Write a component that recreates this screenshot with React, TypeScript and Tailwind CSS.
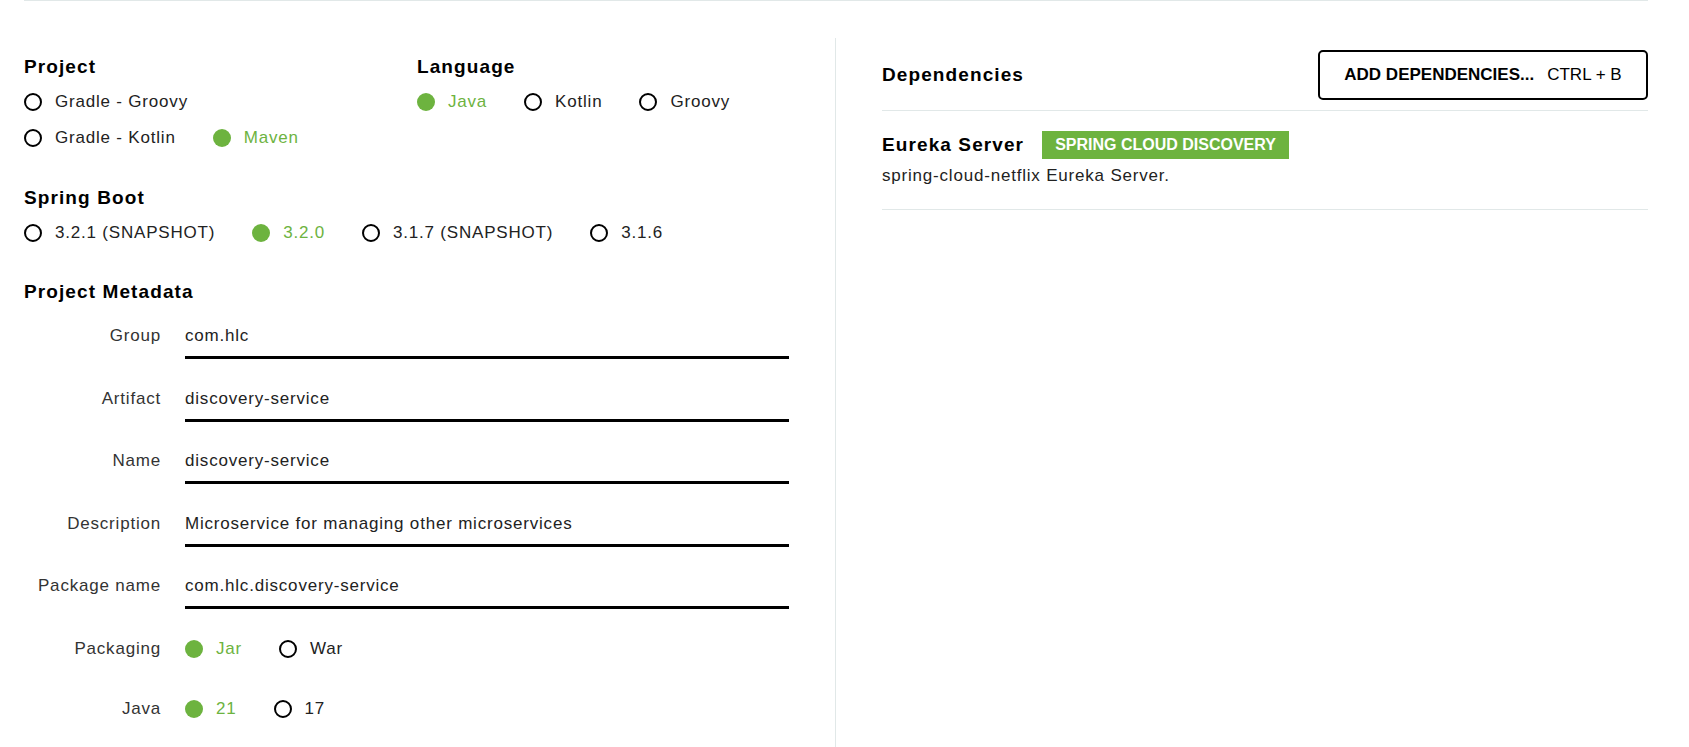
const Radio = ({ label, checked }: { label: string; checked?: boolean }) => (
  <div className="flex items-center gap-[13px]">
    {checked ? (
      <span className="w-[18px] h-[18px] shrink-0 rounded-full bg-[#6db33f]" />
    ) : (
      <span className="w-[18px] h-[18px] shrink-0 rounded-full border-2 border-black" />
    )}
    <span className={checked ? "text-[#6db33f]" : "text-[#222]"}>{label}</span>
  </div>
);

const Heading = ({ children }: { children: React.ReactNode }) => (
  <p className="text-[19px] leading-[24px] font-bold tracking-[1.1px] text-black">{children}</p>
);

const Field = ({ label, value }: { label: string; value: string }) => (
  <div className="flex gap-[24px]">
    <p className="w-[137px] text-right text-[#333]">{label}</p>
    <p className="flex-1 border-b-[3px] border-black pb-[8px] text-[#222]">{value}</p>
  </div>
);

const App = () => {
  return (
    <main className="w-[1689px] h-[747px] overflow-hidden bg-white font-['Liberation_Sans',Arial,sans-serif] text-[17px] leading-[24px] tracking-[0.8px]">
      <div className="ml-[24px] w-[1624px] border-t border-[#e1e8e8] flex pt-[37px]">
        <section className="w-[812px] border-r border-[#e1e8e8] pr-[46px] pt-[17px] pb-[60px]">
          <div className="flex">
            <div className="w-[393px]">
              <Heading>Project</Heading>
              <div className="flex gap-[37px] mt-[11px]">
                <Radio label="Gradle - Groovy" />
              </div>
              <div className="flex gap-[37px] mt-[12px]">
                <Radio label="Gradle - Kotlin" />
                <Radio label="Maven" checked />
              </div>
            </div>
            <div>
              <Heading>Language</Heading>
              <div className="flex gap-[37px] mt-[11px]">
                <Radio label="Java" checked />
                <Radio label="Kotlin" />
                <Radio label="Groovy" />
              </div>
            </div>
          </div>

          <div className="mt-[36px]">
            <Heading>Spring Boot</Heading>
            <div className="flex gap-[37px] mt-[11px]">
              <Radio label="3.2.1 (SNAPSHOT)" />
              <Radio label="3.2.0" checked />
              <Radio label="3.1.7 (SNAPSHOT)" />
              <Radio label="3.1.6" />
            </div>
          </div>

          <div className="mt-[35px]">
            <Heading>Project Metadata</Heading>
            <div className="flex flex-col gap-[27.5px] mt-[20px]">
              <Field label="Group" value="com.hlc" />
              <Field label="Artifact" value="discovery-service" />
              <Field label="Name" value="discovery-service" />
              <Field label="Description" value="Microservice for managing other microservices" />
              <Field label="Package name" value="com.hlc.discovery-service" />
            </div>
            <div className="flex gap-[24px] mt-[28px]">
              <p className="w-[137px] text-right text-[#333]">Packaging</p>
              <div className="flex gap-[37px]">
                <Radio label="Jar" checked />
                <Radio label="War" />
              </div>
            </div>
            <div className="flex gap-[24px] mt-[36px]">
              <p className="w-[137px] text-right text-[#333]">Java</p>
              <div className="flex gap-[37px]">
                <Radio label="21" checked />
                <Radio label="17" />
              </div>
            </div>
          </div>
        </section>

        <section className="flex-1 pl-[46px] pt-[12px]">
          <div className="flex items-center justify-between pb-[10px] border-b border-[#e1e8e8]">
            <Heading>Dependencies</Heading>
            <button className="w-[330px] h-[50px] border-2 border-black rounded-[5px] flex items-center justify-center gap-[13px] tracking-normal text-black">
              <span className="font-bold">ADD DEPENDENCIES...</span>
              <span>CTRL + B</span>
            </button>
          </div>
          <div className="pt-[20px] pb-[21px] border-b border-[#e1e8e8]">
            <div className="flex items-center gap-[18px] h-[28px]">
              <Heading>Eureka Server</Heading>
              <span className="bg-[#6db33f] text-white font-bold text-[16px] leading-[28px] h-[28px] px-[13px] tracking-normal">
                SPRING CLOUD DISCOVERY
              </span>
            </div>
            <p className="mt-[5px] text-[#222]">spring-cloud-netflix Eureka Server.</p>
          </div>
        </section>
      </div>
    </main>
  );
};

export default App;
